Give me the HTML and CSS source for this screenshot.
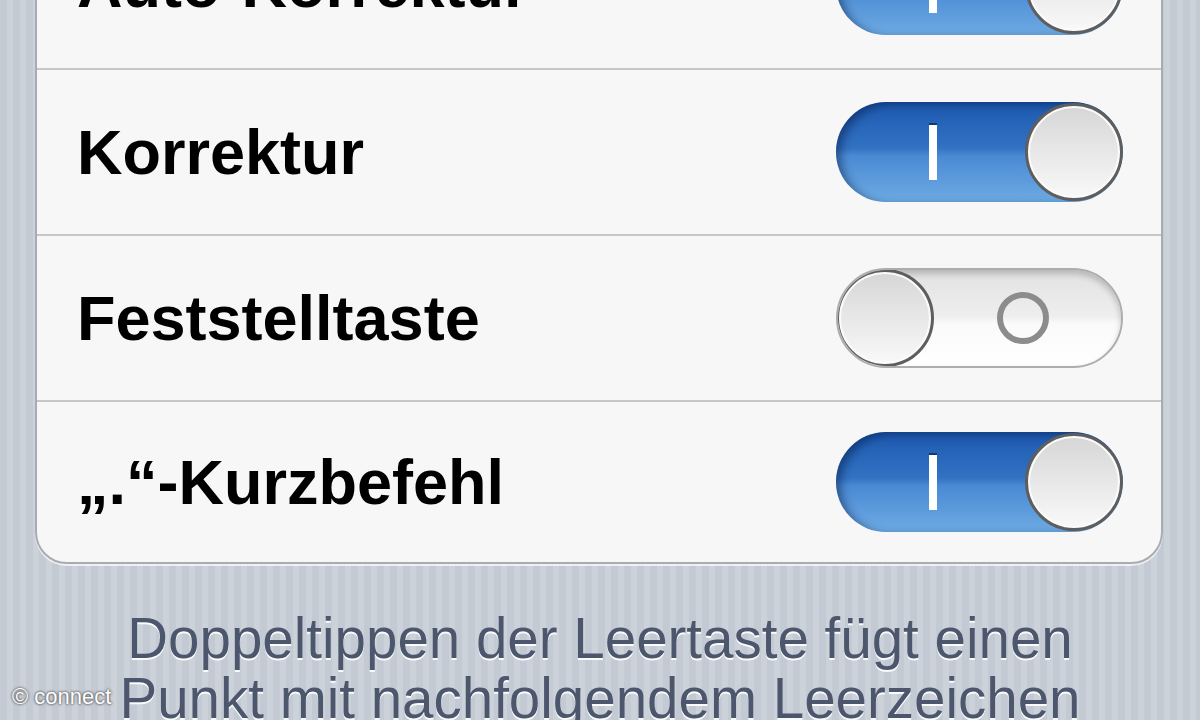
FILE: index.html
```html
<!DOCTYPE html>
<html>
<head>
  <meta charset="utf-8">
  <title>Tastaturen</title>
  <link rel="stylesheet" href="styles.css">
</head>
<body>
<div class="group">

<div class="row">
<div class="row_label">Auto-Korrektur</div>
<div class="switch switch_on"><div class="switch_mark"><span></span></div><div class="knob"></div></div>
</div>

<div class="row">
<div class="row_label">Korrektur</div>
<div class="switch switch_on"><div class="switch_mark"><span></span></div><div class="knob"></div></div>
</div>

<div class="row">
<div class="row_label">Feststelltaste</div>
<div class="switch switch_off"><div class="knob"></div><div class="switch_mark"><span></span></div></div>
</div>

<div class="row row_last">
<div class="row_label">„.“-Kurzbefehl</div>
<div class="switch switch_on"><div class="switch_mark"><span></span></div><div class="knob"></div></div>
</div>

</div>

<div class="footer_text">
Doppeltippen der Leertaste fügt einen<br>
Punkt mit nachfolgendem Leerzeichen
</div>

<div class="watermark">© connect</div>
</body>
</html>
```

FILE: styles.css
```css
body { margin:0px; padding:0px; height:720px; overflow:hidden;
  font-family:"Liberation Sans", Arial, sans-serif;
  background:repeating-linear-gradient(90deg, #c4cad3 0px, #c4cad3 7px, #ccd2d9 7px, #ccd2d9 13px); }

/* gruppierte tabelle */
.group { margin:-100px 37px 0px 35px; background:#f7f7f7; border:2px solid #a7acb3;
  border-radius:32px; box-shadow:0px 2px 0px rgba(255,255,255,0.7); overflow:hidden; }
.row { height:164px; display:flex; align-items:center; justify-content:space-between;
  padding:0px 38px 0px 40px; border-top:2px solid #c6c6c6; }
.row:first-child { border-top:none; height:166px; }
.row_last { height:160px; }
.row_label { font-size:63px; font-weight:bold; color:#000; }

/* schalter */
.switch { width:287px; height:100px; border-radius:50px; box-sizing:border-box;
  display:flex; align-items:center; overflow:hidden; }
.switch_on { background:linear-gradient(#1d59b0 0%, #3272c2 46%, #4a8ad3 54%, #6daae3 100%);
  box-shadow:inset 5px 3px 8px rgba(0,20,60,0.45); }
.switch_off { background:linear-gradient(#e2e2e2 0%, #eeeeee 48%, #fafafa 56%, #ffffff 100%);
  border:2px solid #adadad; box-shadow:inset 0px 4px 6px rgba(0,0,0,0.2); }
.switch_mark { flex:1; display:flex; justify-content:center; align-items:center; }
.switch_on .switch_mark span { width:8px; height:55px; background:#fff;
  box-shadow:0px -2px 0px #12386e; margin-left:4px; }
.switch_off .switch_mark span { width:40px; height:40px; border-radius:50%;
  border:6px solid #8c8c8c; margin-right:10px; }

.knob { width:98px; height:98px; border-radius:50%; box-sizing:border-box; flex:none;
  border:3px solid #5e5e5e; background:linear-gradient(#d6d6d6, #f9f9f9);
  box-shadow:inset 0px 0px 0px 2px #fbfbfb; }
.switch_off .knob { margin-left:-2px; }

.footer_text { padding-top:45px; text-align:center; font-size:56.5px; line-height:60px;
  color:#4c566c; text-shadow:0px 2px 0px rgba(255,255,255,0.9); }

.watermark { position:absolute; left:12px; top:684px; font-size:22px; color:#fff;
  text-shadow:0px 0px 3px #555, 0px 0px 2px #555; }
```
